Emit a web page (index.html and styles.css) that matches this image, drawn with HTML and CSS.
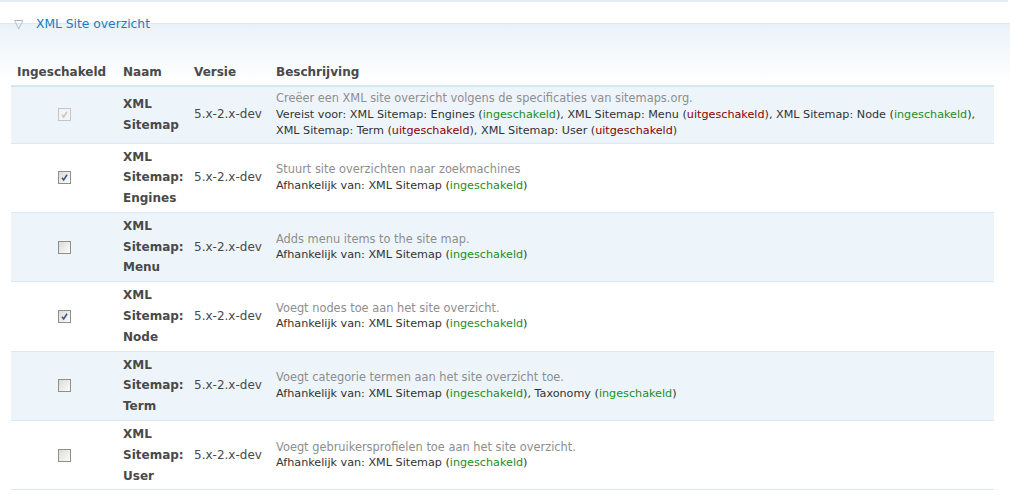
FILE: index.html
```html
<!DOCTYPE html>
<html lang="nl">
<head>
<meta charset="utf-8">
<title>XML Site overzicht</title>
<link rel="stylesheet" href="styles.css">
</head>
<body>
<div class="topbar"></div>
<div class="fieldset">
  <div class="legend"><span class="tri">&#9661;</span><a class="legend-link" href="#">XML Site overzicht</a></div>
  <table class="modules">
    <colgroup>
      <col class="c-en"><col class="c-name"><col class="c-ver"><col class="c-desc">
    </colgroup>
    <thead>
      <tr><th>Ingeschakeld</th><th>Naam</th><th>Versie</th><th>Beschrijving</th></tr>
    </thead>
    <tbody>
      <tr class="odd">
        <td class="cb"><span class="check checked disabled"><svg viewBox="0 0 13 13"><path d="M3.5 6.8 L5.5 9.3 L9.5 3.3"/></svg></span></td>
        <td class="name">XML Sitemap</td>
        <td class="ver">5.x-2.x-dev</td>
        <td class="desc">Creëer een XML site overzicht volgens de specificaties van sitemaps.org.<div class="deps">Vereist voor: XML Sitemap: Engines (<span class="on">ingeschakeld</span>), XML Sitemap: Menu (<span class="off">uitgeschakeld</span>), XML Sitemap: Node (<span class="on">ingeschakeld</span>), XML Sitemap: Term (<span class="off">uitgeschakeld</span>), XML Sitemap: User (<span class="off">uitgeschakeld</span>)</div></td>
      </tr>
      <tr class="even">
        <td class="cb"><span class="check checked"><svg viewBox="0 0 13 13"><path d="M3.5 6.8 L5.5 9.3 L9.5 3.3"/></svg></span></td>
        <td class="name">XML Sitemap: Engines</td>
        <td class="ver">5.x-2.x-dev</td>
        <td class="desc">Stuurt site overzichten naar zoekmachines<div class="deps">Afhankelijk van: XML Sitemap (<span class="on">ingeschakeld</span>)</div></td>
      </tr>
      <tr class="odd">
        <td class="cb"><span class="check"></span></td>
        <td class="name">XML Sitemap: Menu</td>
        <td class="ver">5.x-2.x-dev</td>
        <td class="desc">Adds menu items to the site map.<div class="deps">Afhankelijk van: XML Sitemap (<span class="on">ingeschakeld</span>)</div></td>
      </tr>
      <tr class="even">
        <td class="cb"><span class="check checked"><svg viewBox="0 0 13 13"><path d="M3.5 6.8 L5.5 9.3 L9.5 3.3"/></svg></span></td>
        <td class="name">XML Sitemap: Node</td>
        <td class="ver">5.x-2.x-dev</td>
        <td class="desc">Voegt nodes toe aan het site overzicht.<div class="deps">Afhankelijk van: XML Sitemap (<span class="on">ingeschakeld</span>)</div></td>
      </tr>
      <tr class="odd">
        <td class="cb"><span class="check"></span></td>
        <td class="name">XML Sitemap: Term</td>
        <td class="ver">5.x-2.x-dev</td>
        <td class="desc">Voegt categorie termen aan het site overzicht toe.<div class="deps">Afhankelijk van: XML Sitemap (<span class="on">ingeschakeld</span>), Taxonomy (<span class="on">ingeschakeld</span>)</div></td>
      </tr>
      <tr class="even">
        <td class="cb"><span class="check"></span></td>
        <td class="name">XML Sitemap: User</td>
        <td class="ver">5.x-2.x-dev</td>
        <td class="desc">Voegt gebruikersprofielen toe aan het site overzicht.<div class="deps">Afhankelijk van: XML Sitemap (<span class="on">ingeschakeld</span>)</div></td>
      </tr>
    </tbody>
  </table>
</div>
</body>
</html>
```
FILE: styles.css
```css
html, body {
  margin: 0;
  padding: 0;
  background: #fff;
}
body {
  font-family: "DejaVu Sans", Verdana, sans-serif;
  font-size: 12px;
  color: #494949;
}
.topbar {
  width: 1008px;
  height: 0;
  border-bottom: 2px solid #e3ecf3;
}
.fieldset {
  margin-top: 21px;
  width: 995px;
  padding: 0 11px 0 12px;
  margin-left: -1px;
  border-top: 1px solid #dbe7f1;
  border-right: 1px solid #dbe7f1;
  background: linear-gradient(#eaf2f9 0px, #f5f9fc 30px, #ffffff 60px);
}
.legend {
  display: flex;
  align-items: center;
  height: 14px;
  margin-top: -7px;
  padding-left: 3px;
}
.tri {
  font-size: 12px;
  color: #9aa6b1;
  width: 22px;
}
.legend-link {
  color: #1b7cc1;
  text-decoration: none;
  font-size: 12.3px;
}
.modules {
  margin-top: 28px;
  width: 983px;
  table-layout: fixed;
  border-collapse: collapse;
}
.c-en { width: 106px; }
.c-name { width: 71px; }
.c-ver { width: 82px; }
.modules th {
  text-align: left;
  font-weight: bold;
  color: #494949;
  padding: 3px 6px;
  line-height: 20px;
  border-bottom: 2px solid #d3e7f4;
}
.modules td {
  padding: 3px 6px;
  vertical-align: middle;
}
tr.odd { background: #edf5fa; }
tr.even { background: #fff; }
tbody tr { border-bottom: 1px solid #d9e8f3; }
td.cb { text-align: center; line-height: 0; }
td.name { font-weight: bold; line-height: 20.8px; }
td.ver { line-height: 20.8px; }
td.desc {
  color: #8e8e8e;
  font-size: 11.4px;
  line-height: 16.5px;
}
.deps {
  color: #333;
  font-size: 11.2px;
  line-height: 16.5px;
}
.on { color: #1f8c1f; }
.off { color: #8b0000; }
.check {
  display: inline-block;
  width: 11px;
  height: 11px;
  border: 1px solid #8f8f8f;
  background: linear-gradient(135deg, #dcdcd6, #fbfbf9);
  vertical-align: middle;
}
.check svg {
  width: 11px;
  height: 11px;
  display: block;
}
.check path {
  fill: none;
  stroke: #3f4f8f;
  stroke-width: 1.8;
}
.check.disabled {
  border-color: #c5c5c5;
  background: #f4f4f4;
}
.check.disabled path { stroke: #c6c6c6; }
```
